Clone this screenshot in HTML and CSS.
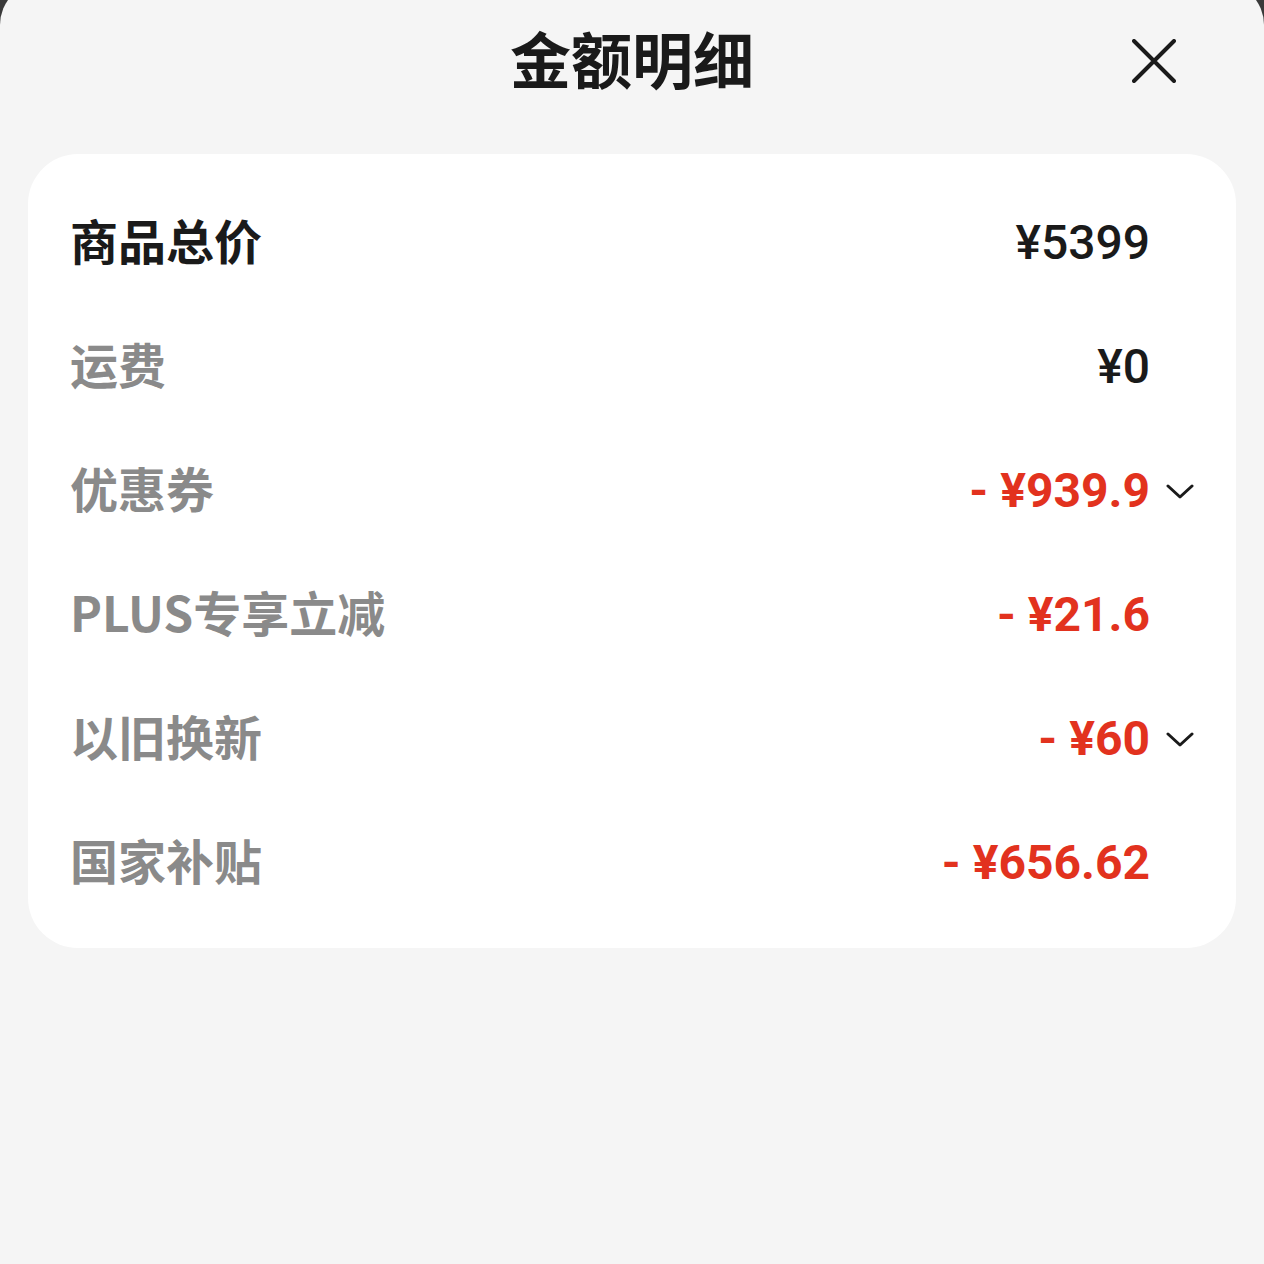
FILE: index.html
```html
<!DOCTYPE html>
<html lang="zh-CN">
<head>
<meta charset="utf-8">
<title>金额明细</title>
<link rel="stylesheet" href="styles.css">
</head>
<body>
<div class="sheet">
  <header class="header">
    <h1 class="title">金额明细</h1>
    <button class="close" aria-label="关闭">
      <svg width="44" height="44" viewBox="0 0 44 44"><path d="M2 2 L42 42 M42 2 L2 42" stroke="#1a1a1a" stroke-width="4" stroke-linecap="round" fill="none"/></svg>
    </button>
  </header>
  <section class="card">
    <div class="row">
      <span class="label label-main">商品总价</span>
      <span class="value">¥5399</span>
      <span class="slot"></span>
    </div>
    <div class="row">
      <span class="label">运费</span>
      <span class="value">¥0</span>
      <span class="slot"></span>
    </div>
    <div class="row">
      <span class="label">优惠券</span>
      <span class="value value-red">- ¥939.9</span>
      <span class="slot"><svg class="chev" width="28" height="15" viewBox="0 0 28 15"><path d="M2 2 L14 13 L26 2" stroke="#1a1a1a" stroke-width="3" stroke-linecap="round" stroke-linejoin="round" fill="none"/></svg></span>
    </div>
    <div class="row">
      <span class="label">PLUS专享立减</span>
      <span class="value value-red">- ¥21.6</span>
      <span class="slot"></span>
    </div>
    <div class="row">
      <span class="label">以旧换新</span>
      <span class="value value-red">- ¥60</span>
      <span class="slot"><svg class="chev" width="28" height="15" viewBox="0 0 28 15"><path d="M2 2 L14 13 L26 2" stroke="#1a1a1a" stroke-width="3" stroke-linecap="round" stroke-linejoin="round" fill="none"/></svg></span>
    </div>
    <div class="row">
      <span class="label">国家补贴</span>
      <span class="value value-red">- ¥656.62</span>
      <span class="slot"></span>
    </div>
  </section>
</div>
</body>
</html>
```
FILE: styles.css
```css
html, body {
  margin: 0;
  padding: 0;
}
body {
  background: #3a3a3a;
  font-family: "Noto Sans CJK SC", "Noto Sans", sans-serif;
  overflow: hidden;
}
.sheet {
  margin-top: -18px;
  padding-top: 18px;
  min-height: 1300px;
  background: #f5f5f5;
  border-radius: 43px 43px 0 0;
}
.header {
  position: relative;
  height: 122px;
  display: flex;
  align-items: center;
  justify-content: center;
}
.title {
  margin: 0;
  padding-bottom: 8px;
  font-size: 61px;
  line-height: 1;
  font-weight: 700;
  color: #1a1a1a;
}
.close {
  position: absolute;
  right: 88px;
  top: 39px;
  width: 44px;
  height: 44px;
  padding: 0;
  border: 0;
  background: none;
  display: block;
}
.close svg { display: block; }
.card {
  margin: 32px 28px 0;
  background: #fff;
  border-radius: 50px;
  padding: 27px 42px 23px 42px;
}
.row {
  height: 124px;
  display: flex;
  align-items: center;
}
.label {
  flex: 1;
  padding-bottom: 8px;
  font-size: 48px;
  line-height: 1;
  font-weight: 700;
  color: #8a8a8a;
}
.label-main {
  color: #1a1a1a;
}
.value {
  font-family: Roboto, "Noto Sans", sans-serif;
  font-size: 48px;
  line-height: 1;
  font-weight: 500;
  color: #1a1a1a;
  white-space: pre;
}
.value-red {
  color: #e2321e;
  font-weight: 700;
}
.slot {
  width: 44px;
  display: flex;
  justify-content: flex-end;
  align-items: center;
}
.chev { display: block; }
```
